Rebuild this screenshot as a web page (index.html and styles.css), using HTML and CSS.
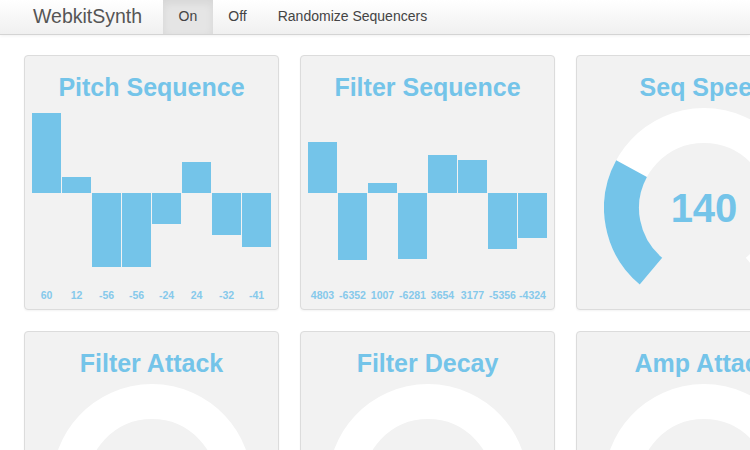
FILE: index.html
```html
<!DOCTYPE html>
<html lang="en">
<head>
<meta charset="utf-8">
<title>WebkitSynth</title>
<link rel="stylesheet" href="styles.css">
</head>
<body>
<header class="navbar">
  <a class="brand" href="#">WebkitSynth</a>
  <nav class="nav">
    <a class="nav-item active" href="#">On</a>
    <a class="nav-item" href="#">Off</a>
    <a class="nav-item" href="#">Randomize Sequencers</a>
  </nav>
</header>

<main class="panels">
  <section class="card">
    <h2 class="card-title">Pitch Sequence</h2>
    <div class="seq">
      <div class="col"><div class="up"><div class="bar" style="height:80px"></div></div><div class="down"></div></div>
      <div class="col"><div class="up"><div class="bar" style="height:16px"></div></div><div class="down"></div></div>
      <div class="col"><div class="up"></div><div class="down"><div class="bar" style="height:74px"></div></div></div>
      <div class="col"><div class="up"></div><div class="down"><div class="bar" style="height:74px"></div></div></div>
      <div class="col"><div class="up"></div><div class="down"><div class="bar" style="height:31px"></div></div></div>
      <div class="col"><div class="up"><div class="bar" style="height:31px"></div></div><div class="down"></div></div>
      <div class="col"><div class="up"></div><div class="down"><div class="bar" style="height:42px"></div></div></div>
      <div class="col"><div class="up"></div><div class="down"><div class="bar" style="height:54px"></div></div></div>
    </div>
    <div class="labels">
      <span>60</span><span>12</span><span>-56</span><span>-56</span><span>-24</span><span>24</span><span>-32</span><span>-41</span>
    </div>
  </section>

  <section class="card">
    <h2 class="card-title">Filter Sequence</h2>
    <div class="seq">
      <div class="col"><div class="up"><div class="bar" style="height:51px"></div></div><div class="down"></div></div>
      <div class="col"><div class="up"></div><div class="down"><div class="bar" style="height:67px"></div></div></div>
      <div class="col"><div class="up"><div class="bar" style="height:10px"></div></div><div class="down"></div></div>
      <div class="col"><div class="up"></div><div class="down"><div class="bar" style="height:66px"></div></div></div>
      <div class="col"><div class="up"><div class="bar" style="height:38px"></div></div><div class="down"></div></div>
      <div class="col"><div class="up"><div class="bar" style="height:33px"></div></div><div class="down"></div></div>
      <div class="col"><div class="up"></div><div class="down"><div class="bar" style="height:56px"></div></div></div>
      <div class="col"><div class="up"></div><div class="down"><div class="bar" style="height:45px"></div></div></div>
    </div>
    <div class="labels">
      <span>4803</span><span>-6352</span><span>1007</span><span>-6281</span><span>3654</span><span>3177</span><span>-5356</span><span>-4324</span>
    </div>
  </section>

  <section class="card">
    <h2 class="card-title">Seq Speed</h2>
    <svg class="knob" viewBox="0 0 200 200" width="200" height="200">
      <path class="ring" d="M46.97 163.20 A82.5 82.5 0 1 1 153.03 163.20"/>
      <path class="fill" d="M46.97 163.20 A82.5 82.5 0 0 1 27.57 60.51"/>
      <text class="knob-value" x="100" y="114" text-anchor="middle">140</text>
    </svg>
  </section>

  <section class="card">
    <h2 class="card-title">Filter Attack</h2>
    <svg class="knob" viewBox="0 0 200 200" width="200" height="200">
      <path class="ring" d="M46.97 163.20 A82.5 82.5 0 1 1 153.03 163.20"/>
      <path class="fill" d="M46.97 163.20 A82.5 82.5 0 0 1 22.85 129.40"/>
    </svg>
  </section>

  <section class="card">
    <h2 class="card-title">Filter Decay</h2>
    <svg class="knob" viewBox="0 0 200 200" width="200" height="200">
      <path class="ring" d="M46.97 163.20 A82.5 82.5 0 1 1 153.03 163.20"/>
      <path class="fill" d="M46.97 163.20 A82.5 82.5 0 0 1 22.85 129.40"/>
    </svg>
  </section>

  <section class="card">
    <h2 class="card-title">Amp Attack</h2>
    <svg class="knob" viewBox="0 0 200 200" width="200" height="200">
      <path class="ring" d="M46.97 163.20 A82.5 82.5 0 1 1 153.03 163.20"/>
      <path class="fill" d="M46.97 163.20 A82.5 82.5 0 0 1 22.85 129.40"/>
    </svg>
  </section>
</main>
</body>
</html>
```

FILE: styles.css
```css
html {
  overflow: hidden;
}

body {
  margin: 0;
  background: #ffffff;
  font-family: "Liberation Sans", Arial, sans-serif;
  color: #555555;
}

.navbar {
  display: flex;
  align-items: stretch;
  height: 34px;
  padding-left: 13px;
  background: linear-gradient(#ffffff, #f0f0f0);
  border-bottom: 1px solid #d4d4d4;
  box-shadow: 0 1px 3px rgba(0, 0, 0, 0.06);
}

.brand {
  padding: 4px 21px 0 20px;
  font-size: 19.5px;
  line-height: 24px;
  color: #555555;
  text-decoration: none;
}

.nav {
  display: flex;
}

.nav-item {
  padding: 6px 15.5px 8px;
  font-size: 14px;
  line-height: 20px;
  color: #444444;
  text-decoration: none;
}

.nav-item.active {
  background: #e5e5e5;
  box-shadow: inset 0 3px 8px rgba(0, 0, 0, 0.07);
}

.panels {
  display: grid;
  grid-template-columns: repeat(3, 255px);
  gap: 21px;
  padding: 20px 0 0 24px;
}

.card {
  box-sizing: border-box;
  height: 255px;
  padding: 16px 7px 0;
  background: #f2f2f2;
  border: 1px solid #dcdcdc;
  border-radius: 4px;
  box-shadow: 0 1px 2px rgba(0, 0, 0, 0.05);
  display: flex;
  flex-direction: column;
  align-items: center;
}

.card-title {
  margin: 0;
  font-size: 25px;
  line-height: 30px;
  font-weight: bold;
  color: #74c4e9;
  white-space: nowrap;
}

.seq {
  align-self: stretch;
  display: flex;
  gap: 1px;
  margin-top: 6px;
  height: 170px;
}

.col {
  flex: 1;
  display: grid;
  grid-template-rows: 85px 85px;
}

.up {
  display: flex;
  flex-direction: column;
  justify-content: flex-end;
}

.down {
  display: flex;
  flex-direction: column;
  justify-content: flex-start;
}

.bar {
  background: #74c4e9;
}

.labels {
  align-self: stretch;
  display: flex;
  gap: 1px;
  margin-top: 11px;
}

.labels span {
  flex: 1;
  text-align: center;
  font-size: 10.5px;
  line-height: 12px;
  font-weight: bold;
  color: #86c9eb;
}

.knob {
  display: block;
  margin-top: 6px;
  flex: none;
}

.ring {
  fill: none;
  stroke: #ffffff;
  stroke-width: 35;
}

.fill {
  fill: none;
  stroke: #74c4e9;
  stroke-width: 35;
}

.knob-value {
  font-family: "Liberation Sans", Arial, sans-serif;
  font-size: 40px;
  font-weight: bold;
  fill: #74c4e9;
}
```
